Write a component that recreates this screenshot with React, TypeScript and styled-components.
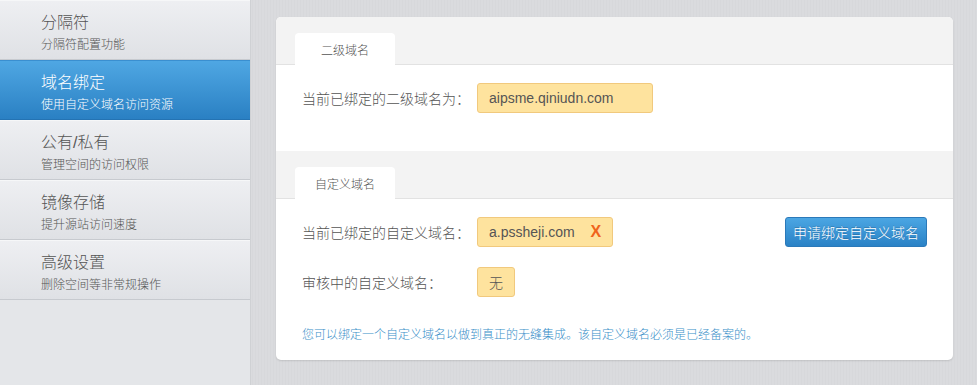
import React from 'react';
import styled, { createGlobalStyle } from 'styled-components';

const GlobalStyle = createGlobalStyle`
  html, body {
    margin: 0;
    padding: 0;
    height: 100%;
    background: #d9dadd;
  }
  body {
    font-family: "Liberation Sans", "Noto Sans CJK SC", sans-serif;
    font-weight: 300;
    color: #555;
  }
  #root {
    height: 100%;
  }
`;

const Layout = styled.div`
  display: flex;
  height: 100vh;
  background: repeating-linear-gradient(90deg, #d7d8db 0, #d7d8db 1px, #dadbde 1px, #dadbde 3px);
`;

const Sidebar = styled.nav`
  width: 250px;
  flex: none;
  display: flex;
  flex-direction: column;
  background: #e4e6e9;
  border-right: 1px solid #cfd1d4;
`;

const NavItem = styled.div<{ $active?: boolean }>`
  height: 60px;
  box-sizing: border-box;
  padding: 12px 0 0 41px;
  border-top: 1px solid ${({ $active }) => ($active ? '#3a8fd0' : '#f6f7f8')};
  border-bottom: 1px solid ${({ $active }) => ($active ? '#2473b3' : '#c7cacf')};
  background: ${({ $active }) =>
    $active
      ? 'linear-gradient(#4fa7e3, #2a80c3)'
      : 'linear-gradient(#eeeff2, #dfe1e5)'};
  color: ${({ $active }) => ($active ? '#fff' : '#555')};
`;

const NavTitle = styled.div`
  font-size: 16px;
  line-height: 20px;
`;

const NavDesc = styled.div`
  font-size: 12px;
  line-height: 16px;
  margin-top: 4px;
`;

const Main = styled.main`
  flex: 1;
  padding: 17px 24px 0 25px;
`;

const Card = styled.div`
  background: #fff;
  border-radius: 5px;
  overflow: hidden;
  box-shadow: 0 1px 2px rgba(0, 0, 0, 0.12);
`;

const SectionHead = styled.div`
  height: 48px;
  box-sizing: border-box;
  padding: 16px 0 0 19px;
  background: #f3f3f3;
  border-bottom: 1px solid #e2e2e2;
  display: flex;
  align-items: flex-end;
`;

const Tab = styled.div`
  width: 100px;
  height: 32px;
  margin-bottom: -1px;
  background: #fff;
  border-radius: 4px 4px 0 0;
  font-size: 12px;
  display: flex;
  align-items: center;
  justify-content: center;
  color: #555;
`;

const SectionBody = styled.div<{ $pad: string }>`
  padding: ${({ $pad }) => $pad};
`;

const Row = styled.div`
  display: flex;
  align-items: center;
  & + & {
    margin-top: 20px;
  }
`;

const Label = styled.div`
  width: 175px;
  flex: none;
  font-size: 14px;
  color: #555;
`;

const Value = styled.div<{ $width?: number }>`
  height: 30px;
  width: ${({ $width }) => ($width ? `${$width}px` : 'auto')};
  box-sizing: border-box;
  padding: 0 11px;
  display: flex;
  align-items: center;
  background: #fee39e;
  border: 1px solid #f1c97d;
  border-radius: 3px;
  font-size: 14px;
  color: #555;
`;

const Remove = styled.span`
  margin-left: 16px;
  color: #f0641c;
  font-weight: bold;
  font-size: 16px;
`;

const Button = styled.button`
  margin-left: auto;
  height: 30px;
  padding: 0 7px;
  border: 1px solid #2b79b9;
  border-radius: 3px;
  background: linear-gradient(#4ba6e3, #2a82c6);
  color: #fff;
  font-family: inherit;
  font-weight: 300;
  font-size: 14px;
  text-shadow: 0 -1px 0 rgba(0, 0, 0, 0.2);
`;

const Note = styled.p`
  margin: 30px 0 0;
  font-size: 12px;
  line-height: 16px;
  color: #3a8fc9;
`;

const navItems = [
  { title: '分隔符', desc: '分隔符配置功能' },
  { title: '域名绑定', desc: '使用自定义域名访问资源', active: true },
  { title: '公有/私有', desc: '管理空间的访问权限' },
  { title: '镜像存储', desc: '提升源站访问速度' },
  { title: '高级设置', desc: '删除空间等非常规操作' },
];

export default function App() {
  return (
    <>
      <GlobalStyle />
      <Layout>
        <Sidebar>
          {navItems.map((item) => (
            <NavItem key={item.title} $active={item.active}>
              <NavTitle>{item.title}</NavTitle>
              <NavDesc>{item.desc}</NavDesc>
            </NavItem>
          ))}
        </Sidebar>
        <Main>
          <Card>
            <SectionHead>
              <Tab>二级域名</Tab>
            </SectionHead>
            <SectionBody $pad="18px 26px 38px">
              <Row>
                <Label>当前已绑定的二级域名为：</Label>
                <Value $width={176}>aipsme.qiniudn.com</Value>
              </Row>
            </SectionBody>
            <SectionHead>
              <Tab>自定义域名</Tab>
            </SectionHead>
            <SectionBody $pad="18px 26px 17px">
              <Row>
                <Label>当前已绑定的自定义域名：</Label>
                <Value>
                  a.pssheji.com<Remove>X</Remove>
                </Value>
                <Button>申请绑定自定义域名</Button>
              </Row>
              <Row>
                <Label>审核中的自定义域名：</Label>
                <Value>无</Value>
              </Row>
              <Note>您可以绑定一个自定义域名以做到真正的无缝集成。该自定义域名必须是已经备案的。</Note>
            </SectionBody>
          </Card>
        </Main>
      </Layout>
    </>
  );
}
